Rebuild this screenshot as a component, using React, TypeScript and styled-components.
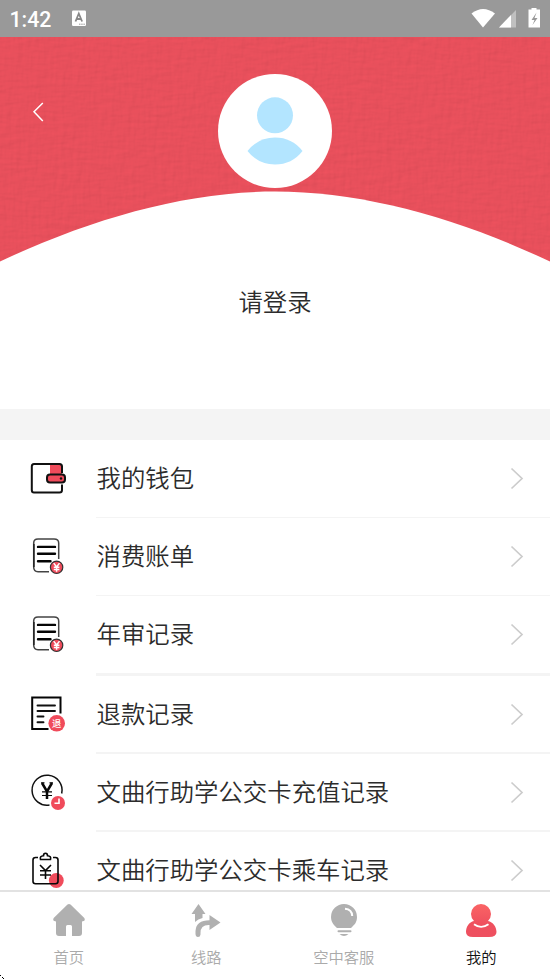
import React from "react";
import styled, { createGlobalStyle } from "styled-components";

const GlobalStyle = createGlobalStyle`
  * { box-sizing: border-box; }
  html, body, #root { margin: 0; padding: 0; height: 100%; }
  body { overflow: hidden; background: #fff; }
`;

const Screen = styled.div`
  width: 550px;
  height: 979px;
  display: flex;
  flex-direction: column;
  overflow: hidden;
  background: #fff;
  color: #2c2c2c;
  font-family: "Noto Sans CJK SC", sans-serif;
  font-weight: 350;
`;

const StatusBar = styled.header`
  flex: none;
  height: 37px;
  display: flex;
  align-items: center;
  justify-content: space-between;
  background: #999;
  color: #fff;
`;

const StatusLeft = styled.div`
  display: flex;
  align-items: center;
  padding: 0 0 0 9.5px;
  gap: 19.5px;
`;

const Clock = styled.span`
  width: 43px;
  padding-top: 2px;
  font: 500 21.3px/36px Roboto, sans-serif;
  white-space: nowrap;
`;

const Glyph = styled.svg`
  display: block;
  flex: none;
`;

const Hero = styled.section`
  flex: none;
  height: 225px;
  display: grid;
  grid-template: 225px / 1fr;
  & > * { grid-area: 1 / 1; }
`;

const Back = styled.button`
  width: 16px;
  height: 22px;
  margin: 64px 0 0 30px;
  padding: 0;
  border: 0;
  background: none;
`;

const Avatar = styled.div`
  justify-self: center;
  width: 114px;
  height: 114px;
  margin-top: 36.5px;
  border-radius: 50%;
  background: #fff;
`;

const Login = styled.div`
  flex: none;
  height: 147px;
  padding-top: 21px;
  text-align: center;
  font-size: 24.4px;
  line-height: 36px;
`;

const Divider = styled.div`
  flex: none;
  height: 31px;
  background: #f4f4f4;
`;

const Menu = styled.main`
  flex: 1;
  min-height: 0;
  overflow: hidden;
`;

const Row = styled.div<{ $h: number }>`
  display: flex;
  height: ${(p) => p.$h}px;
`;

const IconCell = styled.div`
  width: 96px;
  padding: 17.5px 0 0 27px;
`;

const RowBody = styled.div<{ $line: number }>`
  flex: 1;
  display: flex;
  justify-content: space-between;
  padding: 0 26px 0 0.5px;
  border-bottom: ${(p) => p.$line}px solid #f4f4f4;
`;

const RowLabel = styled.span`
  font-size: 24.4px;
  line-height: 36px;
  margin-top: 19px;
  white-space: nowrap;
`;

const Arrow = styled(Glyph)`
  margin-top: 26.5px;
`;

const TabBar = styled.nav`
  flex: none;
  height: 89px;
  display: grid;
  grid-template-columns: repeat(4, 1fr);
  border-top: 2px solid #e2e2e2;
  background: #fff;
`;

const Tab = styled.div<{ $active?: boolean }>`
  display: flex;
  flex-direction: column;
  align-items: center;
  padding-top: 10px;
  color: ${(p) => (p.$active ? "#111" : "#aaa")};
  font-size: 15.3px;
  line-height: 22px;
  gap: 7px;
`;

const CornerMark = styled(Glyph)`
  position: absolute;
  left: 0;
  top: 974px;
`;

const RED = "#f04b5b";

const HeroBackdrop = () => (
  <Glyph width="550" height="225" viewBox="0 0 550 225">
    <defs>
      <filter id="weave" x="0" y="0" width="100%" height="100%" colorInterpolationFilters="sRGB">
        <feTurbulence type="fractalNoise" baseFrequency="0.05 0.2" numOctaves="3" seed="4" result="h" />
        <feTurbulence type="fractalNoise" baseFrequency="0.2 0.05" numOctaves="3" seed="9" result="v" />
        <feComposite in="h" in2="v" operator="arithmetic" k2="0.5" k3="0.5" result="mix" />
        <feDiffuseLighting in="mix" surfaceScale="0.8" diffuseConstant="1.15" lightingColor="#e8505c">
          <feDistantLight azimuth="235" elevation="60" />
        </feDiffuseLighting>
      </filter>
    </defs>
    <rect width="550" height="225" fill="#e8505c" />
    <rect width="550" height="225" filter="url(#weave)" opacity=".3" />
    <path d="M0 224.500C92 181 187 154.500 275 154.500S458 181 550 224.500V225H0Z" fill="#fff" />
  </Glyph>
);

const WalletIcon = () => (
  <Glyph width="42" height="42" viewBox="0 0 42 42" fill="none" stroke="#111" strokeWidth="2">
    <path d="M23 6.500h10q2 0 2 2V16H23Z" fill={RED} stroke="none" />
    <path d="M35 15V8.500q0-2.500-2.500-2.500H7Q4.800 6 4.800 8.500V32Q4.800 34.500 7 34.500H32.500Q35 34.500 35 32V26.500" />
    <rect x="20" y="16.500" width="18" height="8" rx="3" fill={RED} />
    <circle cx="34" cy="20.500" r="1.200" fill="#111" stroke="none" />
  </Glyph>
);

const BillIcon = () => (
  <Glyph width="42" height="42" viewBox="0 0 42 42" fill="none">
    <path d="M31.700 23V7Q31.700 3 27 3H11Q6.700 3 6.700 7V31Q6.700 35.700 11 35.700H22" stroke="#444" strokeWidth="1.500" />
    <path d="M6.900 8V31" stroke="#222" strokeWidth="1.500" />
    <path d="M11 10.900H28M11 17.700H28M11 25.200H23.500" stroke="#050505" strokeWidth="2.400" strokeLinecap="round" />
    <circle cx="29.600" cy="31.300" r="6.200" fill={RED} stroke="#333" strokeWidth="1.200" />
    <path d="m26.700 27.100 2.900 3.800 2.900-3.800M29.600 30.800v5M26.800 31.300h5.600M26.800 33.600h5.600" stroke="#fff" strokeWidth="1.500" />
  </Glyph>
);

const RefundIcon = () => (
  <Glyph width="42" height="42" viewBox="0 0 42 42" fill="none">
    <path d="M33.500 19.500V3.500H5.200V35H21.500" stroke="#050505" strokeWidth="2" />
    <path d="M10.500 11.500H28M10.500 17H28M10.500 22.500H16.500M10.500 28.300H16.500" stroke="#111" strokeWidth="1.900" strokeLinecap="round" />
    <circle cx="29.700" cy="29.300" r="8.300" fill={RED} />
    <text x="29.700" y="32.800" textAnchor="middle" fontSize="9.300" fontWeight="500" fill="#fff">退</text>
  </Glyph>
);

const TopUpIcon = () => (
  <Glyph width="42" height="42" viewBox="0 0 42 42" fill="none">
    <path d="M34.700 21.500A15 15 0 1 0 22.500 33" stroke="#111" strokeWidth="1.500" />
    <path d="m15 11 5 8.500 5-8.500M20 18.500V27" stroke="#080808" strokeWidth="2.500" />
    <path d="M14 10.800h3.500M22.500 10.800h3.500M15 19.800h10M15 23.500h10" stroke="#080808" strokeWidth="1.200" />
    <circle cx="31" cy="31" r="7" fill={RED} />
    <path d="M32 26.500v4.800h-4.500" stroke="#fff" strokeWidth="1.600" />
  </Glyph>
);

const RideIcon = () => (
  <Glyph width="42" height="42" viewBox="0 0 42 42" fill="none" stroke="#080808" strokeWidth="1.600">
    <circle cx="29.300" cy="30.500" r="7.400" fill={RED} stroke="none" />
    <path d="M11 7.500H8.500Q6 7.500 6 10V31.500Q6 33.700 8.500 33.700H28.500Q31 33.700 31 31.500V10Q31 7.500 28.500 7.500H26" />
    <path d="M13.500 9.500q-1-3.500 3-3.700 0-2.500 2-2.500t2 2.500q4 .200 3 3.700Z" />
    <path d="m13 15 5.500 5.500L24 15M18.500 20.500V29M13 20.700h11M13 25h11" />
  </Glyph>
);

const ArrowIcon = () => (
  <Arrow width="14" height="24" viewBox="0 0 14 24" fill="none">
    <path d="M1.500 1.500 12 11.500 1.500 21.500" stroke="#ccc" strokeWidth="1.700" />
  </Arrow>
);

const items = [
  { label: "我的钱包", icon: <WalletIcon />, height: 78, line: 1.5 },
  { label: "消费账单", icon: <BillIcon />, height: 78, line: 1.5 },
  { label: "年审记录", icon: <BillIcon />, height: 80, line: 3 },
  { label: "退款记录", icon: <RefundIcon />, height: 78, line: 2 },
  { label: "文曲行助学公交卡充值记录", icon: <TopUpIcon />, height: 78, line: 2 },
  { label: "文曲行助学公交卡乘车记录", icon: <RideIcon />, height: 78, line: 0 },
];

const HomeIcon = () => (
  <Glyph width="36" height="36" viewBox="0 0 36 36" fill="#b0b0b0">
    <path d="M16.500 2.600Q18 1.400 19.500 2.600L33.300 16Q35 19 31 19.500V31Q31 34 28 34H21V24.500Q21 23 19.500 23H16.500Q15 23 15 24.500V34H8Q5 34 5 31V19.500Q1 19 2.700 16Z" />
  </Glyph>
);

const RouteIcon = () => (
  <Glyph width="36" height="36" viewBox="0 0 36 36" fill="#b0b0b0">
    <path d="M10.500 2 17.500 12H14.500V16Q10 17 7 20V12H3.500Z" />
    <path d="M21.500 13 32.500 20.500 21.500 28V23Q12.500 22.500 12.500 31V32.500Q12.300 35 10 35T7.500 32V29Q8 18.500 21.500 18.300Z" />
  </Glyph>
);

const BulbIcon = () => (
  <Glyph width="36" height="36" viewBox="0 0 36 36" fill="none">
    <path d="M18 2A13 13 0 0 0 5 15C5 21 9 24 11 26H25C28 23 31 21 31 15A13 13 0 0 0 18 2Z" fill="#b0b0b0" />
    <path d="M19 6.800Q26 7.500 26.200 14" stroke="#fff" strokeWidth="2" />
    <path d="M12.500 29.200H24.500" stroke="#b0b0b0" strokeWidth="2" strokeLinecap="round" />
    <path d="M13.500 32h9Q18 36 13.500 32Z" fill="#b0b0b0" />
  </Glyph>
);

const ProfileIcon = () => (
  <Glyph width="36" height="36" viewBox="0 0 36 36" fill="none">
    <defs>
      <linearGradient id="profile" x2="0" y2="1">
        <stop stopColor="#fa6465" />
        <stop offset=".6" stopColor="#ef505e" />
        <stop offset="1" stopColor="#ee5060" />
      </linearGradient>
    </defs>
    <path d="M18 2A10 10 0 0 0 8 12Q8 16 11 19C6 20 3 25 3 30Q3 35 10 35H26Q33.500 35 33.500 30C33.500 25 30 20 25 19Q28 16 28 12A10 10 0 0 0 18 2Z" fill="url(#profile)" />
    <path d="M11 22.200Q18 27.500 25.500 22.200" stroke="#fff" strokeWidth="1.800" />
  </Glyph>
);

export default function App() {
  return (
    <>
      <GlobalStyle />
      <Screen>
        <StatusBar>
          <StatusLeft>
            <Clock>1:42</Clock>
            <Glyph width="15" height="17" viewBox="0 0 15 17">
              <rect x="0" y="0.500" width="14" height="15.500" rx="1.200" fill="#fff" />
              <path d="m3.500 11.500 3.300-8 3.300 8M4.800 9h4" fill="none" stroke="#888" strokeWidth="1.800" />
              <path d="M7 14.200h6" stroke="#999" strokeDasharray="1.500 .7" />
            </Glyph>
          </StatusLeft>
          <Glyph width="80" height="26" viewBox="0 0 80 26" fill="#fff">
            <path d="M1.500 7.500Q13 -1.500 25 7.500L13 21.500Z" />
            <path d="M46 4V21.500H29Z" fill="#c0c0c0" />
            <path d="M41 9V21.500H29Z" />
            <path d="M60 3.500h1.500V2h5v1.500H70v18H58.500V3.500Z" />
            <path d="m66.500 6.500-5 7.500h3L62.500 19l5-7h-3Z" fill="#999" />
          </Glyph>
        </StatusBar>
        <Hero>
          <HeroBackdrop />
          <Back aria-label="返回">
            <Glyph width="16" height="22" viewBox="0 0 16 22" fill="none">
              <path d="M12.800 2 4 10.700 12.800 20" stroke="#fff" strokeWidth="1.500" />
            </Glyph>
          </Back>
          <Avatar>
            <Glyph width="114" height="114" viewBox="0 0 114 114" fill="#b3e5ff">
              <circle cx="57" cy="41.300" r="18" />
              <path d="M29.500 77Q40 63.500 57 63.500T84.500 77Q74 90.500 57 90.500T29.500 77Z" />
            </Glyph>
          </Avatar>
        </Hero>
        <Login>请登录</Login>
        <Divider />
        <Menu>
          {items.map((item) => (
            <Row key={item.label} $h={item.height}>
              <IconCell>{item.icon}</IconCell>
              <RowBody $line={item.line}>
                <RowLabel>{item.label}</RowLabel>
                <ArrowIcon />
              </RowBody>
            </Row>
          ))}
        </Menu>
        <TabBar>
          <Tab><HomeIcon />首页</Tab>
          <Tab><RouteIcon />线路</Tab>
          <Tab><BulbIcon />空中客服</Tab>
          <Tab $active><ProfileIcon />我的</Tab>
        </TabBar>
        <CornerMark width="4" height="5" viewBox="0 0 4 5">
          <path d="M0 1h1v1H0zM2 3h1v1H2zM3 4h1v1H3z" />
        </CornerMark>
      </Screen>
    </>
  );
}
